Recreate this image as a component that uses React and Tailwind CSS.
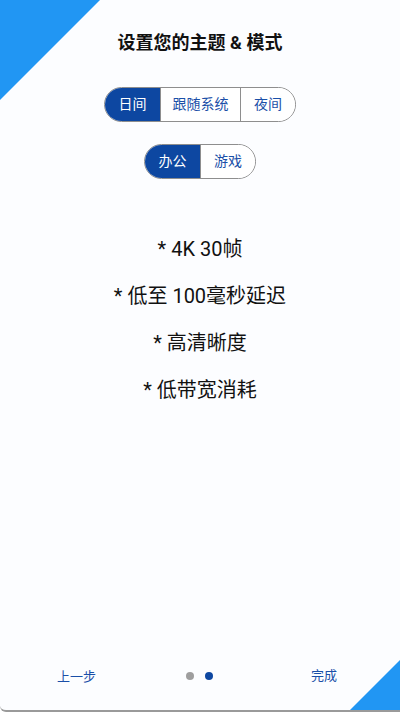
import { useState } from 'react';

const font = { fontFamily: 'Roboto, "Noto Sans CJK SC", sans-serif' };

function Segmented({ options, value, onChange, widths }) {
  return (
    <div className="flex h-[35px] rounded-full border border-[#8e8e8e] overflow-hidden">
      {options.map((opt, i) => (
        <button
          key={opt}
          onClick={() => onChange(i)}
          className={
            'flex items-center justify-center text-[14px] ' +
            (i > 0 ? 'border-l border-[#8e8e8e] ' : '') +
            (value === i ? 'bg-[#0d47a1] text-white' : 'bg-white text-[#1a4fa8]')
          }
          style={{ width: widths[i] }}
        >
          {opt}
        </button>
      ))}
    </div>
  );
}

export default function App() {
  const [theme, setTheme] = useState(0);
  const [mode, setMode] = useState(0);

  const features = ['* 4K 30帧', '* 低至 100毫秒延迟', '* 高清晰度', '* 低带宽消耗'];

  return (
    <div className="relative w-[400px] h-[712px] overflow-hidden bg-[#fcfdff] rounded-bl-[6px] border-b-2 border-[#9a9a9a]" style={font}>
      <div className="absolute top-0 left-0 w-[100px] h-[100px] bg-[#2196f3] [clip-path:polygon(0_0,100%_0,0_100%)]" />
      <div className="absolute bottom-0 right-0 w-[50px] h-[50px] bg-[#2196f3] [clip-path:polygon(100%_0,100%_100%,0_100%)]" />

      <div className="flex flex-col items-center h-full">
        <h1 className="mt-[31px] text-[18px] font-bold text-[#111] leading-[24px]">设置您的主题 &amp; 模式</h1>

        <div className="mt-[32px]">
          <Segmented options={['日间', '跟随系统', '夜间']} value={theme} onChange={setTheme} widths={[55, 80, 55]} />
        </div>
        <div className="mt-[22px]">
          <Segmented options={['办公', '游戏']} value={mode} onChange={setMode} widths={[55, 55]} />
        </div>

        <div className="mt-[57px] flex flex-col items-center gap-[21px]">
          {features.map((f) => (
            <div key={f} className="text-[20px] leading-[26px] text-[#111]">{f}</div>
          ))}
        </div>

        <div className="mt-auto mb-[24px] w-full h-[20px] flex items-center">
          <div className="w-[186px] pl-[57px]">
            <button className="text-[13px] leading-[20px] text-[#1a4fa8] whitespace-nowrap">上一步</button>
          </div>
          <div className="flex items-center gap-[11px]">
            <span className="w-[8px] h-[8px] rounded-full bg-[#9e9e9e]" />
            <span className="w-[8px] h-[8px] rounded-full bg-[#0d47a1]" />
          </div>
          <div className="flex-1 flex justify-end pr-[63px]">
            <button className="text-[13px] leading-[20px] text-[#1a4fa8] whitespace-nowrap">完成</button>
          </div>
        </div>
      </div>
    </div>
  );
}
